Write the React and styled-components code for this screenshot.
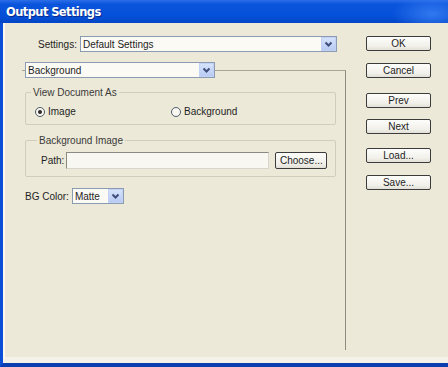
import React from "react";
import styled, { createGlobalStyle } from "styled-components";

const Global = createGlobalStyle`
  html, body { margin: 0; padding: 0; overflow: hidden; background: #ECE9D8; }
  * { box-sizing: border-box; }
`;

const Window = styled.div`
  width: 448px;
  height: 367px;
  display: flex;
  flex-direction: column;
  font-family: "Liberation Sans", Arial, sans-serif;
  font-size: 10px;
  color: #1e1e1e;
`;

const TitleBar = styled.div`
  height: 23px;
  flex: none;
  display: flex;
  align-items: center;
  padding-left: 6px;
  background:
    radial-gradient(ellipse 40px 18px at 432px 14px, rgba(60,130,245,0.8), rgba(60,130,245,0) 100%),
    linear-gradient(180deg, #2c6ee8 0%, #0b55dc 18%, #0550d8 70%, #0446c6 100%);
`;

const Title = styled.span`
  color: #fff;
  font-family: "DejaVu Sans", "Liberation Sans", sans-serif;
  font-weight: bold;
  font-size: 11.5px;
  letter-spacing: -0.6px;
  text-shadow: 1px 1px 0 #0a2a8a;
`;

const Frame = styled.div`
  flex: 1;
  display: flex;
  border-left: 3px solid #0a4fd6;
  border-bottom: 4px solid #0a3fb0;
`;

const Body = styled.div`
  flex: 1;
  display: flex;
  gap: 20px;
  padding: 13px 0 0 17px;
  background: #ECE9D8;
  border-left: 2px solid #fbf9ee;
  border-bottom: 6px solid #f3f1e8;
`;

const Main = styled.div`
  width: 324px;
  display: flex;
  flex-direction: column;
`;

const Row = styled.div`
  display: flex;
  align-items: center;
  height: ${(p) => p.$h || 16}px;
  padding-left: ${(p) => p.$pl || 0}px;
  margin-top: ${(p) => p.$mt || 0}px;
`;

const Label = styled.span`
  margin-right: ${(p) => p.$mr ?? 3}px;
  white-space: nowrap;
`;

const Combo = styled.div`
  width: ${(p) => p.$w}px;
  height: 16px;
  display: flex;
  align-items: center;
  background: #fbfaf4;
  border: 1px solid #8a9bb2;
  padding-left: 2px;
  flex: none;
`;

const ComboText = styled.span`
  flex: 1;
  white-space: nowrap;
  overflow: hidden;
`;

const ArrowBox = styled.span`
  width: 15px;
  height: 14px;
  display: flex;
  align-items: center;
  justify-content: center;
  background: linear-gradient(180deg, #d6e2fb, #b9cbf3);
  border: 1px solid #c3d2f4;
  flex: none;
`;

const Chevron = () => (
  <svg width="9" height="7" viewBox="0 0 9 7">
    <path d="M1.5 1.5 L4.5 4.5 L7.5 1.5" fill="none" stroke="#3d4f7a" strokeWidth="2" />
  </svg>
);

const Panel = styled.div`
  margin-top: 18px;
  height: 280px;
  border-top: 1px solid #a8a698;
  border-right: 1px solid #8f8d82;
  padding: 0 9px 0 3px;
  display: flex;
  flex-direction: column;
`;

const PanelHead = styled.div`
  margin-top: -9px;
  display: flex;
`;

const Group = styled.fieldset`
  margin: ${(p) => p.$mt || 0}px 0 0 0;
  padding: ${(p) => p.$pt}px 0 ${(p) => p.$pb}px ${(p) => p.$pl}px;
  border: 1px solid #cfcdbf;
  border-radius: 2px;
  min-width: 0;
`;

const Legend = styled.legend`
  margin-left: -4px;
  padding: 0 2px;
  line-height: 13px;
  color: #3a3a3a;
`;

const RadioItem = styled.label`
  display: flex;
  align-items: center;
  gap: 3px;
  width: ${(p) => (p.$w ? `${p.$w}px` : "auto")};
  height: 13px;
`;

const RadioCircle = styled.span`
  width: 10px;
  height: 10px;
  border-radius: 50%;
  border: 1px solid #4a5a6a;
  background: #f8f7f0;
  display: flex;
  align-items: center;
  justify-content: center;
  &::after {
    content: "";
    width: 4px;
    height: 4px;
    border-radius: 50%;
    background: ${(p) => (p.$on ? "#2a2a2a" : "transparent")};
  }
`;

const TextInput = styled.div`
  width: 203px;
  height: 17px;
  background: #f8f7f1;
  border: 1px solid #8a8a80;
  border-right-color: #d8d6cc;
  border-bottom-color: #d8d6cc;
`;

const Button = styled.button`
  width: ${(p) => p.$w || 65}px;
  height: ${(p) => p.$h || 15}px;
  margin-top: ${(p) => p.$mt || 0}px;
  margin-left: ${(p) => p.$ml || 0}px;
  padding: 0;
  font-family: "Liberation Sans", Arial, sans-serif;
  font-size: 10px;
  color: #1e1e1e;
  background: linear-gradient(180deg, #fdfdfb 0%, #f1f0ea 70%, #e2e0d6 100%);
  border: 1px solid #3c3c3c;
  border-radius: 2px;
  flex: none;
`;

const Side = styled.div`
  width: 65px;
  display: flex;
  flex-direction: column;
`;

export default function App() {
  return (
    <Window>
      <Global />
      <TitleBar>
        <Title>Output Settings</Title>
      </TitleBar>
      <Frame>
        <Body>
          <Main>
            <Row $pl={16}>
              <Label>Settings:</Label>
              <Combo $w={257}>
                <ComboText>Default Settings</ComboText>
                <ArrowBox><Chevron /></ArrowBox>
              </Combo>
            </Row>
            <Panel>
              <PanelHead>
                <Combo $w={190}>
                  <ComboText>Background</ComboText>
                  <ArrowBox><Chevron /></ArrowBox>
                </Combo>
              </PanelHead>
              <Group $mt={8} $pt={6} $pb={6} $pl={9}>
                <Legend>View Document As</Legend>
                <Row $h={13}>
                  <RadioItem $w={136}>
                    <RadioCircle $on />
                    Image
                  </RadioItem>
                  <RadioItem>
                    <RadioCircle />
                    Background
                  </RadioItem>
                </Row>
              </Group>
              <Group $mt={9} $pt={5} $pb={7} $pl={15}>
                <Legend>Background Image</Legend>
                <Row $h={17}>
                  <Label $mr={2}>Path:</Label>
                  <TextInput />
                  <Button $w={52} $h={17} $ml={6}>Choose...</Button>
                </Row>
              </Group>
              <Row $mt={11}>
                <Label $mr={3}>BG Color:</Label>
                <Combo $w={52}>
                  <ComboText>Matte</ComboText>
                  <ArrowBox><Chevron /></ArrowBox>
                </Combo>
              </Row>
            </Panel>
          </Main>
          <Side>
            <Button>OK</Button>
            <Button $mt={12}>Cancel</Button>
            <Button $mt={15}>Prev</Button>
            <Button $mt={11}>Next</Button>
            <Button $mt={14}>Load...</Button>
            <Button $mt={12}>Save...</Button>
          </Side>
        </Body>
      </Frame>
    </Window>
  );
}
